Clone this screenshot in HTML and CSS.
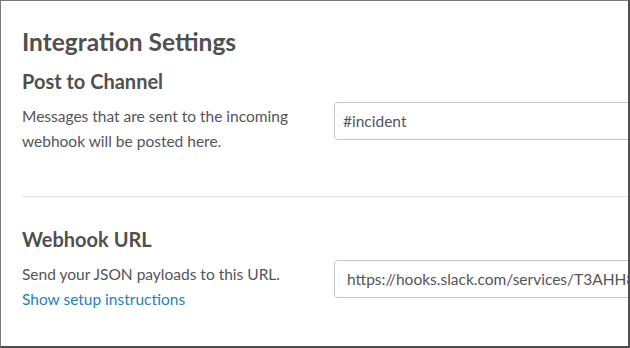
FILE: index.html
```html
<!DOCTYPE html>
<html lang="en">
<head>
    <meta charset="UTF-8">
    <title>Integration Settings</title>
    <link rel="stylesheet" href="styles.css">
</head>
<body>
    <div class="settings">
        <!-- Header -->
        <h1 class="title">Integration Settings</h1>

        <!-- Post to Channel -->
        <div class="setting">
            <h2 class="setting-label">Post to Channel</h2>
            <div class="setting-row">
                <div class="setting-help">
                    <p>Messages that are sent to the incoming webhook will be posted here.</p>
                </div>
                <input type="text" class="field" value="#incident">
            </div>
        </div>

        <hr class="divider">

        <!-- Webhook URL -->
        <div class="setting">
            <h2 class="setting-label">Webhook URL</h2>
            <div class="setting-row">
                <div class="setting-help">
                    <p>Send your JSON payloads to this URL.</p>
                    <a href="#" class="link">Show setup instructions</a>
                </div>
                <input type="text" class="field field-url" value="https://hooks.slack.com/services/T3AHH8N2R/B7YQ4K9ZD/xQ2Lm8">
            </div>
        </div>
    </div>
</body>
</html>
```

FILE: styles.css
```css
/* Global Reset */
* {
    margin: 0;
    padding: 0;
    box-sizing: border-box;
}

html, body {
    height: 100%;
    overflow: hidden;
}

/* Window frame */
body {
    font-family: Lato, 'Open Sans', sans-serif;
    color: #555459;
    background: #fff;
    border-top: 1px solid #7a7a7a;
    border-left: 1px solid #7a7a7a;
    border-right: 2px solid #4f4f4f;
    border-bottom: 2px solid #4f4f4f;
}

.settings {
    width: 900px;
    padding: 24px 0 0 21px;
}

/* Header */
.title {
    font-size: 24.5px;
    font-weight: 700;
    line-height: 34px;
    color: #505050;
    margin-bottom: 8px;
}

.setting-label {
    font-size: 20px;
    font-weight: 700;
    line-height: 28px;
    color: #505050;
    margin-bottom: 9px;
}

.setting-row {
    display: flex;
    align-items: flex-start;
}

.setting-help {
    width: 312px;
    font-size: 15.5px;
    line-height: 25px;
}

.link {
    color: #2a80b9;
    text-decoration: none;
}

/* Input Fields */
.field {
    width: 420px;
    height: 38px;
    margin-top: -2px;
    padding: 0 8px;
    font-family: Lato, 'Open Sans', sans-serif;
    font-size: 15.5px;
    color: #555459;
    border: 1px solid #c5c5c5;
    border-radius: 4px;
    background: #fff;
    outline: none;
}

.field-url {
    padding: 0 12px;
}

/* Divider */
.divider {
    border: none;
    border-top: 1px solid #e5e5e5;
    margin: 42px 0 28px;
}
```
